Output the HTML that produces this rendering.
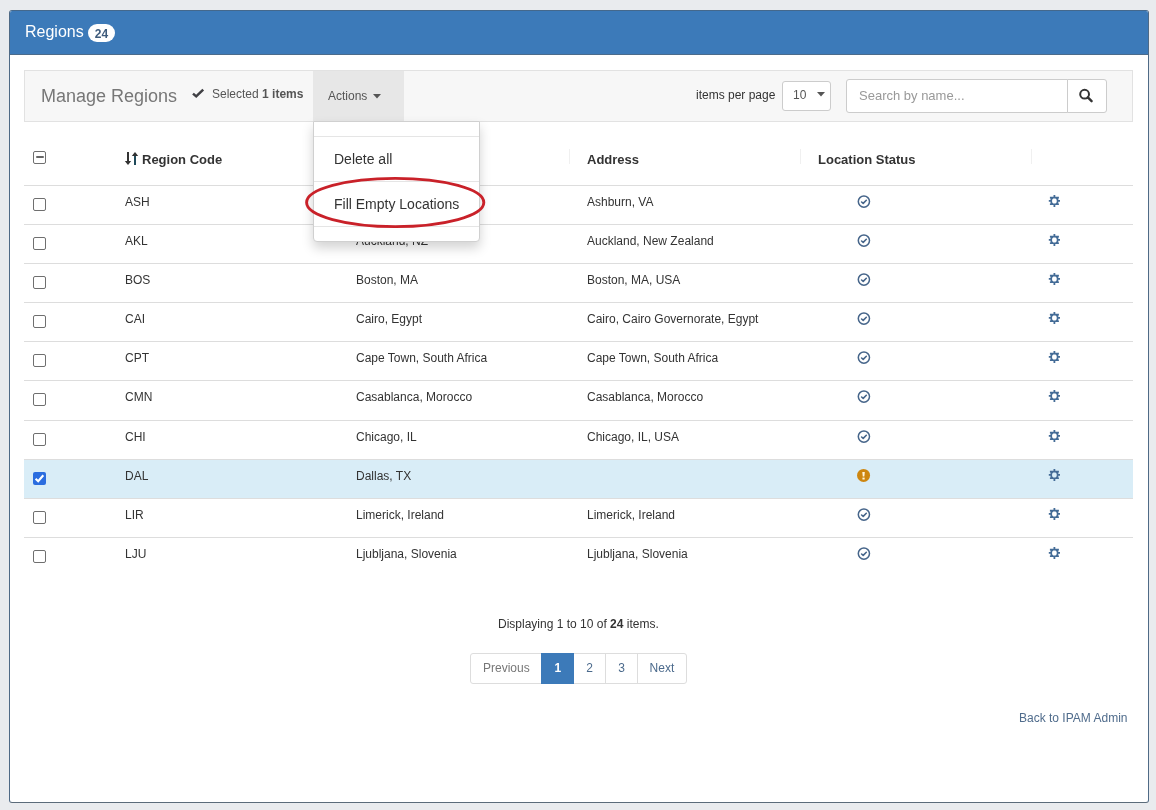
<!DOCTYPE html>
<html><head><meta charset="utf-8">
<style>
*{box-sizing:border-box;margin:0;padding:0}
html,body{width:1156px;height:810px;overflow:hidden;background:#e9ebee;font-family:"Liberation Sans",sans-serif;color:#333;position:relative}
.abs{position:absolute}
.t{position:absolute;white-space:nowrap;line-height:1}
.s12{font-size:12px}
</style></head><body>
<div id="wrap" style="position:absolute;left:0;top:0;width:1156px;height:810px;will-change:transform">

<div class="abs" style="left:9px;top:10px;width:1140px;height:793px;background:#fff;border:1px solid #4f6a86;border-top-color:#44688c;border-bottom-color:#5b6b7a;border-radius:3px;overflow:hidden">
<div class="abs" style="left:0;top:0;width:1138px;height:44px;background:#3c7ab9;border-bottom:1px solid #4b6b8b"></div>
</div>
<div class="t" style="left:25px;top:24.46px;font-size:16px;color:#fff;font-weight:normal;">Regions</div>
<div class="abs" style="left:88px;top:24px;width:27px;height:18px;border-radius:9px;background:#fff"></div>
<div class="t" style="left:88px;top:27.84px;font-size:12px;color:#3e5b7c;font-weight:bold;width:27px;text-align:center">24</div>
<div class="abs" style="left:24px;top:70px;width:1109px;height:52px;background:#f7f7f7;border:1px solid #e2e2e2"></div>
<div class="t" style="left:41px;top:86.76px;font-size:18px;color:#777;font-weight:normal;">Manage Regions</div>
<svg class="abs" style="left:191px;top:87px" width="14" height="12" viewBox="0 0 14 12"><path d="M2,6.6 L5.2,9.4 L12.2,2.6" fill="none" stroke="#404044" stroke-width="2.5" stroke-linejoin="miter"/></svg>
<div class="t" style="left:212px;top:87.84px;font-size:12px;color:#555;font-weight:normal;">Selected <b>1 items</b></div>
<div class="abs" style="left:313px;top:71px;width:91px;height:50px;background:#e7e7e7"></div>
<div class="t" style="left:328px;top:89.84px;font-size:12px;color:#555;font-weight:normal;">Actions</div>
<svg class="abs" style="left:373px;top:94px" width="8" height="5" viewBox="0 0 8 5"><path d="M0,0 h8 l-4,4.5z" fill="#555"/></svg>
<div class="t" style="left:696px;top:88.84px;font-size:12px;color:#333;font-weight:normal;">items per page</div>
<div class="abs" style="left:782px;top:81px;width:49px;height:30px;background:#fff;border:1px solid #ccc;border-radius:3px"></div>
<div class="t" style="left:793px;top:88.84px;font-size:12px;color:#555;font-weight:normal;">10</div>
<svg class="abs" style="left:817px;top:92px" width="8" height="5" viewBox="0 0 8 5"><path d="M0,0 h8 l-4,4.5z" fill="#555"/></svg>
<div class="abs" style="left:846px;top:79px;width:222px;height:34px;background:#fff;border:1px solid #ccc;border-radius:3px 0 0 3px"></div>
<div class="t" style="left:859px;top:89.00px;font-size:13px;color:#999;font-weight:normal;">Search by name...</div>
<div class="abs" style="left:1067px;top:79px;width:40px;height:34px;background:#fff;border:1px solid #ccc;border-radius:0 3px 3px 0"></div>
<svg class="abs" style="left:1078px;top:88px" width="16" height="15" viewBox="0 0 16 15"><circle cx="6.6" cy="6.2" r="4.4" fill="none" stroke="#333" stroke-width="2"/><path d="M9.8,9.4 L13.6,13.2" stroke="#333" stroke-width="2.4" stroke-linecap="round"/></svg>
<div class="abs" style="left:33px;top:151px;width:13px;height:13px;border:1px solid #6f6f6f;border-radius:2px;background:#fff"></div>
<div class="abs" style="left:35.5px;top:156.4px;width:8px;height:2px;border-radius:1px;background:#666"></div>
<svg class="abs" style="left:124px;top:151px" width="15" height="15" viewBox="0 0 15 15"><path d="M4,1 v11" stroke="#333" stroke-width="2"/><path d="M0.8,10 L4,14 L7.2,10z" fill="#333"/><path d="M11,14 v-11" stroke="#1f4a5a" stroke-width="2"/><path d="M7.8,5 L11,1 L14.2,5z" fill="#333"/></svg>
<div class="t" style="left:142px;top:153.00px;font-size:13px;color:#333;font-weight:bold;">Region Code</div>
<div class="t" style="left:356px;top:153.00px;font-size:13px;color:#333;font-weight:bold;">Name</div>
<div class="t" style="left:587px;top:153.00px;font-size:13px;color:#333;font-weight:bold;">Address</div>
<div class="t" style="left:818px;top:153.00px;font-size:13px;color:#333;font-weight:bold;">Location Status</div>
<div class="abs" style="left:338px;top:149px;width:1px;height:15px;background:#f0f0f0"></div>
<div class="abs" style="left:569px;top:149px;width:1px;height:15px;background:#f0f0f0"></div>
<div class="abs" style="left:800px;top:149px;width:1px;height:15px;background:#f0f0f0"></div>
<div class="abs" style="left:1031px;top:149px;width:1px;height:15px;background:#f0f0f0"></div>
<div class="abs" style="left:24px;top:185px;width:1109px;height:39px;border-top:1px solid #dddddd;background:#fff"></div>
<div class="abs" style="left:33px;top:198px;width:13px;height:13px;border:1px solid #6f6f6f;border-radius:2px;background:#fff"></div>
<div class="t" style="left:125px;top:195.84px;font-size:12px;color:#333;font-weight:normal;">ASH</div>
<div class="t" style="left:356px;top:195.84px;font-size:12px;color:#333;font-weight:normal;">Ashburn, VA</div>
<div class="t" style="left:587px;top:195.84px;font-size:12px;color:#333;font-weight:normal;">Ashburn, VA</div>
<svg class="abs" style="left:855px;top:193px" width="17" height="17" viewBox="0 0 17 17"><g transform="translate(8.90,8.60)"><circle cx="0" cy="0" r="5.6" fill="none" stroke="#46658a" stroke-width="1.5"/><path d="M-2.3,0.4 L-0.7,1.8 L2.4,-1.3" fill="none" stroke="#46658a" stroke-width="1.6" stroke-linecap="round" stroke-linejoin="round"/></g></svg>
<svg class="abs" style="left:1047px;top:193px" width="15" height="15" viewBox="0 0 15 15"><path transform="translate(7.40,7.90)" fill="#446c97" fill-rule="evenodd" d="M-0.9,-6 L0.9,-6 L0.9,-4.1 L4.5,-4.1 L4.5,-2.5 L3.9,-2.5 L3.9,-0.9 L5.6,-0.9 L5.6,0.9 L3.9,0.9 L3.9,2.6 L4.5,2.6 L4.5,4.2 L0.9,4.2 L0.9,6 L-0.9,6 L-0.9,4.2 L-4.5,4.2 L-4.5,2.6 L-3.9,2.6 L-3.9,0.9 L-5.6,0.9 L-5.6,-0.9 L-3.9,-0.9 L-3.9,-2.5 L-4.5,-2.5 L-4.5,-4.1 L-0.9,-4.1 Z M-2.3,-1.2 L-1.1,-2.5 L1.1,-2.5 L2.3,-1.2 L2.3,1.3 L1.1,2.6 L-1.1,2.6 L-2.3,1.3 Z"/></svg>
<div class="abs" style="left:24px;top:224px;width:1109px;height:39px;border-top:1px solid #dddddd;background:#fff"></div>
<div class="abs" style="left:33px;top:237px;width:13px;height:13px;border:1px solid #6f6f6f;border-radius:2px;background:#fff"></div>
<div class="t" style="left:125px;top:234.84px;font-size:12px;color:#333;font-weight:normal;">AKL</div>
<div class="t" style="left:356px;top:234.84px;font-size:12px;color:#333;font-weight:normal;">Auckland, NZ</div>
<div class="t" style="left:587px;top:234.84px;font-size:12px;color:#333;font-weight:normal;">Auckland, New Zealand</div>
<svg class="abs" style="left:855px;top:232px" width="17" height="17" viewBox="0 0 17 17"><g transform="translate(8.90,8.60)"><circle cx="0" cy="0" r="5.6" fill="none" stroke="#46658a" stroke-width="1.5"/><path d="M-2.3,0.4 L-0.7,1.8 L2.4,-1.3" fill="none" stroke="#46658a" stroke-width="1.6" stroke-linecap="round" stroke-linejoin="round"/></g></svg>
<svg class="abs" style="left:1047px;top:232px" width="15" height="15" viewBox="0 0 15 15"><path transform="translate(7.40,7.90)" fill="#446c97" fill-rule="evenodd" d="M-0.9,-6 L0.9,-6 L0.9,-4.1 L4.5,-4.1 L4.5,-2.5 L3.9,-2.5 L3.9,-0.9 L5.6,-0.9 L5.6,0.9 L3.9,0.9 L3.9,2.6 L4.5,2.6 L4.5,4.2 L0.9,4.2 L0.9,6 L-0.9,6 L-0.9,4.2 L-4.5,4.2 L-4.5,2.6 L-3.9,2.6 L-3.9,0.9 L-5.6,0.9 L-5.6,-0.9 L-3.9,-0.9 L-3.9,-2.5 L-4.5,-2.5 L-4.5,-4.1 L-0.9,-4.1 Z M-2.3,-1.2 L-1.1,-2.5 L1.1,-2.5 L2.3,-1.2 L2.3,1.3 L1.1,2.6 L-1.1,2.6 L-2.3,1.3 Z"/></svg>
<div class="abs" style="left:24px;top:263px;width:1109px;height:39px;border-top:1px solid #dddddd;background:#fff"></div>
<div class="abs" style="left:33px;top:276px;width:13px;height:13px;border:1px solid #6f6f6f;border-radius:2px;background:#fff"></div>
<div class="t" style="left:125px;top:273.84px;font-size:12px;color:#333;font-weight:normal;">BOS</div>
<div class="t" style="left:356px;top:273.84px;font-size:12px;color:#333;font-weight:normal;">Boston, MA</div>
<div class="t" style="left:587px;top:273.84px;font-size:12px;color:#333;font-weight:normal;">Boston, MA, USA</div>
<svg class="abs" style="left:855px;top:271px" width="17" height="17" viewBox="0 0 17 17"><g transform="translate(8.90,8.60)"><circle cx="0" cy="0" r="5.6" fill="none" stroke="#46658a" stroke-width="1.5"/><path d="M-2.3,0.4 L-0.7,1.8 L2.4,-1.3" fill="none" stroke="#46658a" stroke-width="1.6" stroke-linecap="round" stroke-linejoin="round"/></g></svg>
<svg class="abs" style="left:1047px;top:271px" width="15" height="15" viewBox="0 0 15 15"><path transform="translate(7.40,7.90)" fill="#446c97" fill-rule="evenodd" d="M-0.9,-6 L0.9,-6 L0.9,-4.1 L4.5,-4.1 L4.5,-2.5 L3.9,-2.5 L3.9,-0.9 L5.6,-0.9 L5.6,0.9 L3.9,0.9 L3.9,2.6 L4.5,2.6 L4.5,4.2 L0.9,4.2 L0.9,6 L-0.9,6 L-0.9,4.2 L-4.5,4.2 L-4.5,2.6 L-3.9,2.6 L-3.9,0.9 L-5.6,0.9 L-5.6,-0.9 L-3.9,-0.9 L-3.9,-2.5 L-4.5,-2.5 L-4.5,-4.1 L-0.9,-4.1 Z M-2.3,-1.2 L-1.1,-2.5 L1.1,-2.5 L2.3,-1.2 L2.3,1.3 L1.1,2.6 L-1.1,2.6 L-2.3,1.3 Z"/></svg>
<div class="abs" style="left:24px;top:302px;width:1109px;height:39px;border-top:1px solid #dddddd;background:#fff"></div>
<div class="abs" style="left:33px;top:315px;width:13px;height:13px;border:1px solid #6f6f6f;border-radius:2px;background:#fff"></div>
<div class="t" style="left:125px;top:312.84px;font-size:12px;color:#333;font-weight:normal;">CAI</div>
<div class="t" style="left:356px;top:312.84px;font-size:12px;color:#333;font-weight:normal;">Cairo, Egypt</div>
<div class="t" style="left:587px;top:312.84px;font-size:12px;color:#333;font-weight:normal;">Cairo, Cairo Governorate, Egypt</div>
<svg class="abs" style="left:855px;top:310px" width="17" height="17" viewBox="0 0 17 17"><g transform="translate(8.90,8.60)"><circle cx="0" cy="0" r="5.6" fill="none" stroke="#46658a" stroke-width="1.5"/><path d="M-2.3,0.4 L-0.7,1.8 L2.4,-1.3" fill="none" stroke="#46658a" stroke-width="1.6" stroke-linecap="round" stroke-linejoin="round"/></g></svg>
<svg class="abs" style="left:1047px;top:310px" width="15" height="15" viewBox="0 0 15 15"><path transform="translate(7.40,7.90)" fill="#446c97" fill-rule="evenodd" d="M-0.9,-6 L0.9,-6 L0.9,-4.1 L4.5,-4.1 L4.5,-2.5 L3.9,-2.5 L3.9,-0.9 L5.6,-0.9 L5.6,0.9 L3.9,0.9 L3.9,2.6 L4.5,2.6 L4.5,4.2 L0.9,4.2 L0.9,6 L-0.9,6 L-0.9,4.2 L-4.5,4.2 L-4.5,2.6 L-3.9,2.6 L-3.9,0.9 L-5.6,0.9 L-5.6,-0.9 L-3.9,-0.9 L-3.9,-2.5 L-4.5,-2.5 L-4.5,-4.1 L-0.9,-4.1 Z M-2.3,-1.2 L-1.1,-2.5 L1.1,-2.5 L2.3,-1.2 L2.3,1.3 L1.1,2.6 L-1.1,2.6 L-2.3,1.3 Z"/></svg>
<div class="abs" style="left:24px;top:341px;width:1109px;height:39px;border-top:1px solid #dddddd;background:#fff"></div>
<div class="abs" style="left:33px;top:354px;width:13px;height:13px;border:1px solid #6f6f6f;border-radius:2px;background:#fff"></div>
<div class="t" style="left:125px;top:351.84px;font-size:12px;color:#333;font-weight:normal;">CPT</div>
<div class="t" style="left:356px;top:351.84px;font-size:12px;color:#333;font-weight:normal;">Cape Town, South Africa</div>
<div class="t" style="left:587px;top:351.84px;font-size:12px;color:#333;font-weight:normal;">Cape Town, South Africa</div>
<svg class="abs" style="left:855px;top:349px" width="17" height="17" viewBox="0 0 17 17"><g transform="translate(8.90,8.60)"><circle cx="0" cy="0" r="5.6" fill="none" stroke="#46658a" stroke-width="1.5"/><path d="M-2.3,0.4 L-0.7,1.8 L2.4,-1.3" fill="none" stroke="#46658a" stroke-width="1.6" stroke-linecap="round" stroke-linejoin="round"/></g></svg>
<svg class="abs" style="left:1047px;top:349px" width="15" height="15" viewBox="0 0 15 15"><path transform="translate(7.40,7.90)" fill="#446c97" fill-rule="evenodd" d="M-0.9,-6 L0.9,-6 L0.9,-4.1 L4.5,-4.1 L4.5,-2.5 L3.9,-2.5 L3.9,-0.9 L5.6,-0.9 L5.6,0.9 L3.9,0.9 L3.9,2.6 L4.5,2.6 L4.5,4.2 L0.9,4.2 L0.9,6 L-0.9,6 L-0.9,4.2 L-4.5,4.2 L-4.5,2.6 L-3.9,2.6 L-3.9,0.9 L-5.6,0.9 L-5.6,-0.9 L-3.9,-0.9 L-3.9,-2.5 L-4.5,-2.5 L-4.5,-4.1 L-0.9,-4.1 Z M-2.3,-1.2 L-1.1,-2.5 L1.1,-2.5 L2.3,-1.2 L2.3,1.3 L1.1,2.6 L-1.1,2.6 L-2.3,1.3 Z"/></svg>
<div class="abs" style="left:24px;top:380px;width:1109px;height:39px;border-top:1px solid #dddddd;background:#fff"></div>
<div class="abs" style="left:33px;top:393px;width:13px;height:13px;border:1px solid #6f6f6f;border-radius:2px;background:#fff"></div>
<div class="t" style="left:125px;top:390.84px;font-size:12px;color:#333;font-weight:normal;">CMN</div>
<div class="t" style="left:356px;top:390.84px;font-size:12px;color:#333;font-weight:normal;">Casablanca, Morocco</div>
<div class="t" style="left:587px;top:390.84px;font-size:12px;color:#333;font-weight:normal;">Casablanca, Morocco</div>
<svg class="abs" style="left:855px;top:388px" width="17" height="17" viewBox="0 0 17 17"><g transform="translate(8.90,8.60)"><circle cx="0" cy="0" r="5.6" fill="none" stroke="#46658a" stroke-width="1.5"/><path d="M-2.3,0.4 L-0.7,1.8 L2.4,-1.3" fill="none" stroke="#46658a" stroke-width="1.6" stroke-linecap="round" stroke-linejoin="round"/></g></svg>
<svg class="abs" style="left:1047px;top:388px" width="15" height="15" viewBox="0 0 15 15"><path transform="translate(7.40,7.90)" fill="#446c97" fill-rule="evenodd" d="M-0.9,-6 L0.9,-6 L0.9,-4.1 L4.5,-4.1 L4.5,-2.5 L3.9,-2.5 L3.9,-0.9 L5.6,-0.9 L5.6,0.9 L3.9,0.9 L3.9,2.6 L4.5,2.6 L4.5,4.2 L0.9,4.2 L0.9,6 L-0.9,6 L-0.9,4.2 L-4.5,4.2 L-4.5,2.6 L-3.9,2.6 L-3.9,0.9 L-5.6,0.9 L-5.6,-0.9 L-3.9,-0.9 L-3.9,-2.5 L-4.5,-2.5 L-4.5,-4.1 L-0.9,-4.1 Z M-2.3,-1.2 L-1.1,-2.5 L1.1,-2.5 L2.3,-1.2 L2.3,1.3 L1.1,2.6 L-1.1,2.6 L-2.3,1.3 Z"/></svg>
<div class="abs" style="left:24px;top:420px;width:1109px;height:39px;border-top:1px solid #dddddd;background:#fff"></div>
<div class="abs" style="left:33px;top:433px;width:13px;height:13px;border:1px solid #6f6f6f;border-radius:2px;background:#fff"></div>
<div class="t" style="left:125px;top:430.84px;font-size:12px;color:#333;font-weight:normal;">CHI</div>
<div class="t" style="left:356px;top:430.84px;font-size:12px;color:#333;font-weight:normal;">Chicago, IL</div>
<div class="t" style="left:587px;top:430.84px;font-size:12px;color:#333;font-weight:normal;">Chicago, IL, USA</div>
<svg class="abs" style="left:855px;top:428px" width="17" height="17" viewBox="0 0 17 17"><g transform="translate(8.90,8.60)"><circle cx="0" cy="0" r="5.6" fill="none" stroke="#46658a" stroke-width="1.5"/><path d="M-2.3,0.4 L-0.7,1.8 L2.4,-1.3" fill="none" stroke="#46658a" stroke-width="1.6" stroke-linecap="round" stroke-linejoin="round"/></g></svg>
<svg class="abs" style="left:1047px;top:428px" width="15" height="15" viewBox="0 0 15 15"><path transform="translate(7.40,7.90)" fill="#446c97" fill-rule="evenodd" d="M-0.9,-6 L0.9,-6 L0.9,-4.1 L4.5,-4.1 L4.5,-2.5 L3.9,-2.5 L3.9,-0.9 L5.6,-0.9 L5.6,0.9 L3.9,0.9 L3.9,2.6 L4.5,2.6 L4.5,4.2 L0.9,4.2 L0.9,6 L-0.9,6 L-0.9,4.2 L-4.5,4.2 L-4.5,2.6 L-3.9,2.6 L-3.9,0.9 L-5.6,0.9 L-5.6,-0.9 L-3.9,-0.9 L-3.9,-2.5 L-4.5,-2.5 L-4.5,-4.1 L-0.9,-4.1 Z M-2.3,-1.2 L-1.1,-2.5 L1.1,-2.5 L2.3,-1.2 L2.3,1.3 L1.1,2.6 L-1.1,2.6 L-2.3,1.3 Z"/></svg>
<div class="abs" style="left:24px;top:459px;width:1109px;height:39px;border-top:1px solid #dddddd;background:#d9edf7"></div>
<div class="abs" style="left:33px;top:472px;width:13px;height:13px;border-radius:2px;background:#2b6ddf"></div>
<svg class="abs" style="left:33px;top:472px" width="13" height="13" viewBox="0 0 13 13"><path d="M2.6,6.7 L5.2,9.3 L10.3,3.3" fill="none" stroke="#fff" stroke-width="2.1"/></svg>
<div class="t" style="left:125px;top:469.84px;font-size:12px;color:#333;font-weight:normal;">DAL</div>
<div class="t" style="left:356px;top:469.84px;font-size:12px;color:#333;font-weight:normal;">Dallas, TX</div>
<svg class="abs" style="left:855px;top:467px" width="17" height="17" viewBox="0 0 17 17"><g transform="translate(8.55,8.40)"><circle cx="0" cy="0" r="6.5" fill="#cd8610"/><path d="M-1.25,-3.3 h2.5 l-0.45,4.5 h-1.6z" fill="#fff4dc"/><rect x="-1.1" y="2.2" width="2.2" height="1.9" fill="#fff4dc"/></g></svg>
<svg class="abs" style="left:1047px;top:467px" width="15" height="15" viewBox="0 0 15 15"><path transform="translate(7.40,7.90)" fill="#446c97" fill-rule="evenodd" d="M-0.9,-6 L0.9,-6 L0.9,-4.1 L4.5,-4.1 L4.5,-2.5 L3.9,-2.5 L3.9,-0.9 L5.6,-0.9 L5.6,0.9 L3.9,0.9 L3.9,2.6 L4.5,2.6 L4.5,4.2 L0.9,4.2 L0.9,6 L-0.9,6 L-0.9,4.2 L-4.5,4.2 L-4.5,2.6 L-3.9,2.6 L-3.9,0.9 L-5.6,0.9 L-5.6,-0.9 L-3.9,-0.9 L-3.9,-2.5 L-4.5,-2.5 L-4.5,-4.1 L-0.9,-4.1 Z M-2.3,-1.2 L-1.1,-2.5 L1.1,-2.5 L2.3,-1.2 L2.3,1.3 L1.1,2.6 L-1.1,2.6 L-2.3,1.3 Z"/></svg>
<div class="abs" style="left:24px;top:498px;width:1109px;height:39px;border-top:1px solid #dddddd;background:#fff"></div>
<div class="abs" style="left:33px;top:511px;width:13px;height:13px;border:1px solid #6f6f6f;border-radius:2px;background:#fff"></div>
<div class="t" style="left:125px;top:508.84px;font-size:12px;color:#333;font-weight:normal;">LIR</div>
<div class="t" style="left:356px;top:508.84px;font-size:12px;color:#333;font-weight:normal;">Limerick, Ireland</div>
<div class="t" style="left:587px;top:508.84px;font-size:12px;color:#333;font-weight:normal;">Limerick, Ireland</div>
<svg class="abs" style="left:855px;top:506px" width="17" height="17" viewBox="0 0 17 17"><g transform="translate(8.90,8.60)"><circle cx="0" cy="0" r="5.6" fill="none" stroke="#46658a" stroke-width="1.5"/><path d="M-2.3,0.4 L-0.7,1.8 L2.4,-1.3" fill="none" stroke="#46658a" stroke-width="1.6" stroke-linecap="round" stroke-linejoin="round"/></g></svg>
<svg class="abs" style="left:1047px;top:506px" width="15" height="15" viewBox="0 0 15 15"><path transform="translate(7.40,7.90)" fill="#446c97" fill-rule="evenodd" d="M-0.9,-6 L0.9,-6 L0.9,-4.1 L4.5,-4.1 L4.5,-2.5 L3.9,-2.5 L3.9,-0.9 L5.6,-0.9 L5.6,0.9 L3.9,0.9 L3.9,2.6 L4.5,2.6 L4.5,4.2 L0.9,4.2 L0.9,6 L-0.9,6 L-0.9,4.2 L-4.5,4.2 L-4.5,2.6 L-3.9,2.6 L-3.9,0.9 L-5.6,0.9 L-5.6,-0.9 L-3.9,-0.9 L-3.9,-2.5 L-4.5,-2.5 L-4.5,-4.1 L-0.9,-4.1 Z M-2.3,-1.2 L-1.1,-2.5 L1.1,-2.5 L2.3,-1.2 L2.3,1.3 L1.1,2.6 L-1.1,2.6 L-2.3,1.3 Z"/></svg>
<div class="abs" style="left:24px;top:537px;width:1109px;height:39px;border-top:1px solid #dddddd;background:#fff"></div>
<div class="abs" style="left:33px;top:550px;width:13px;height:13px;border:1px solid #6f6f6f;border-radius:2px;background:#fff"></div>
<div class="t" style="left:125px;top:547.84px;font-size:12px;color:#333;font-weight:normal;">LJU</div>
<div class="t" style="left:356px;top:547.84px;font-size:12px;color:#333;font-weight:normal;">Ljubljana, Slovenia</div>
<div class="t" style="left:587px;top:547.84px;font-size:12px;color:#333;font-weight:normal;">Ljubljana, Slovenia</div>
<svg class="abs" style="left:855px;top:545px" width="17" height="17" viewBox="0 0 17 17"><g transform="translate(8.90,8.60)"><circle cx="0" cy="0" r="5.6" fill="none" stroke="#46658a" stroke-width="1.5"/><path d="M-2.3,0.4 L-0.7,1.8 L2.4,-1.3" fill="none" stroke="#46658a" stroke-width="1.6" stroke-linecap="round" stroke-linejoin="round"/></g></svg>
<svg class="abs" style="left:1047px;top:545px" width="15" height="15" viewBox="0 0 15 15"><path transform="translate(7.40,7.90)" fill="#446c97" fill-rule="evenodd" d="M-0.9,-6 L0.9,-6 L0.9,-4.1 L4.5,-4.1 L4.5,-2.5 L3.9,-2.5 L3.9,-0.9 L5.6,-0.9 L5.6,0.9 L3.9,0.9 L3.9,2.6 L4.5,2.6 L4.5,4.2 L0.9,4.2 L0.9,6 L-0.9,6 L-0.9,4.2 L-4.5,4.2 L-4.5,2.6 L-3.9,2.6 L-3.9,0.9 L-5.6,0.9 L-5.6,-0.9 L-3.9,-0.9 L-3.9,-2.5 L-4.5,-2.5 L-4.5,-4.1 L-0.9,-4.1 Z M-2.3,-1.2 L-1.1,-2.5 L1.1,-2.5 L2.3,-1.2 L2.3,1.3 L1.1,2.6 L-1.1,2.6 L-2.3,1.3 Z"/></svg>
<div class="t" style="left:498px;top:617.84px;font-size:12px;color:#333;font-weight:normal;">Displaying 1 to 10 of <b>24</b> items.</div>
<div class="abs" style="left:470px;top:653px;width:217px;height:31px;border:1px solid #ddd;border-radius:3px;background:#fff"></div>
<div class="abs" style="left:541px;top:653px;width:33px;height:31px;background:#3c7ab9"></div>
<div class="abs" style="left:605px;top:653px;width:1px;height:31px;background:#ddd"></div>
<div class="abs" style="left:637px;top:653px;width:1px;height:31px;background:#ddd"></div>
<div class="t" style="left:483px;top:661.84px;font-size:12px;color:#777;font-weight:normal;">Previous</div>
<div class="t" style="left:554.6px;top:661.84px;font-size:12px;color:#fff;font-weight:bold;">1</div>
<div class="t" style="left:586.3px;top:661.84px;font-size:12px;color:#4b6a8c;font-weight:normal;">2</div>
<div class="t" style="left:618.2px;top:661.84px;font-size:12px;color:#4b6a8c;font-weight:normal;">3</div>
<div class="t" style="left:649.6px;top:661.84px;font-size:12px;color:#4b6a8c;font-weight:normal;">Next</div>
<div class="t" style="left:1019px;top:711.84px;font-size:12px;color:#506c8c;font-weight:normal;">Back to IPAM Admin</div>
<div class="abs" style="left:313px;top:121px;width:167px;height:121px;background:#fff;border:1px solid #d0d0d0;border-radius:0 0 4px 4px;box-shadow:0 6px 12px rgba(0,0,0,0.175)"></div>
<div class="abs" style="left:314px;top:136px;width:165px;height:1px;background:#e5e5e5"></div>
<div class="abs" style="left:314px;top:181px;width:165px;height:1px;background:#e5e5e5"></div>
<div class="abs" style="left:314px;top:226px;width:165px;height:1px;background:#e5e5e5"></div>
<div class="t" style="left:334px;top:152.15px;font-size:14px;color:#333;font-weight:normal;">Delete all</div>
<div class="t" style="left:334px;top:197.15px;font-size:14px;color:#333;font-weight:normal;">Fill Empty Locations</div>
<svg class="abs" style="left:300px;top:172px" width="190" height="62" viewBox="0 0 190 62"><ellipse cx="95.2" cy="30.5" rx="88.6" ry="24.1" fill="none" stroke="#c92129" stroke-width="2.9"/></svg>
</div></body></html>
